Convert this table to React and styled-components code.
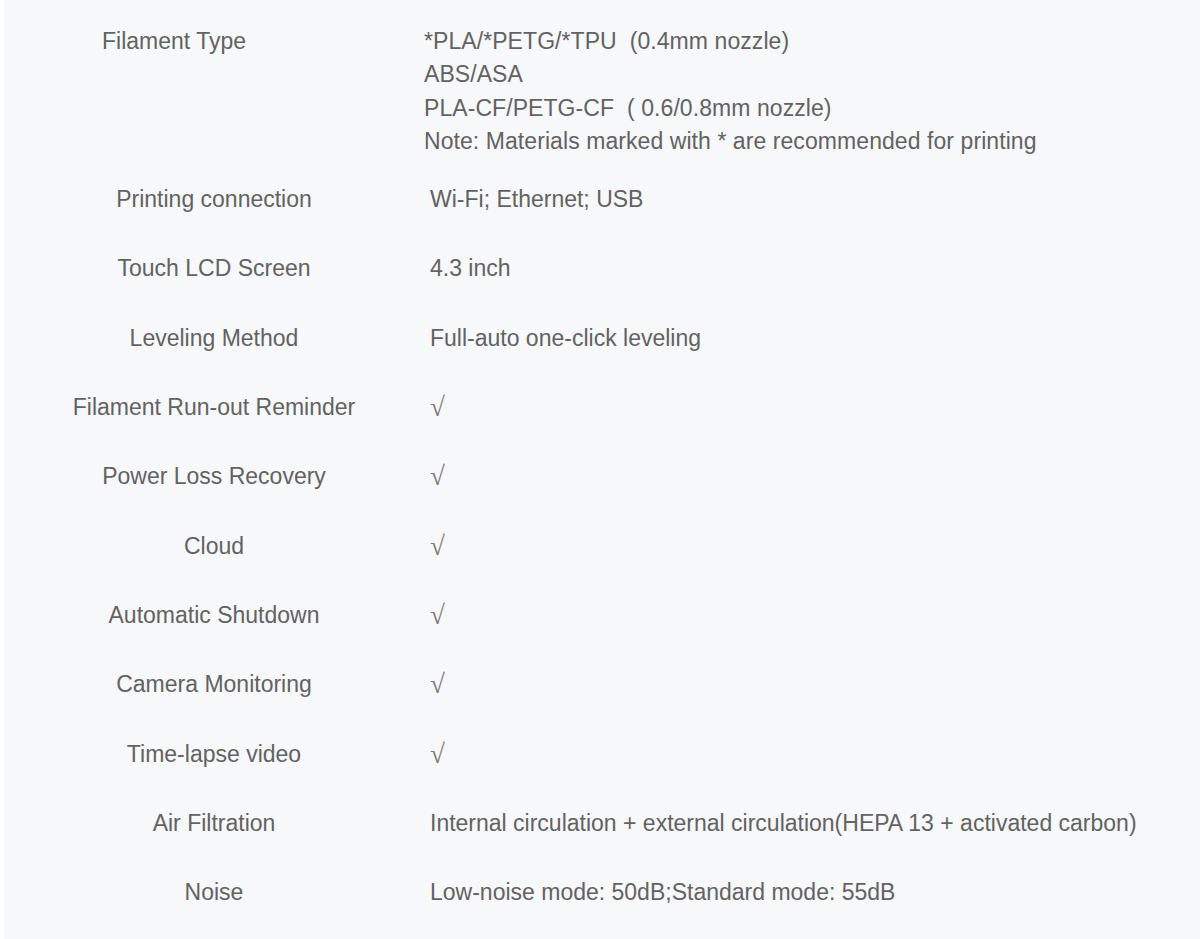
import React from "react";
import styled, { createGlobalStyle } from "styled-components";

const GlobalStyle = createGlobalStyle`
  html, body {
    margin: 0;
    padding: 0;
    background: #ffffff;
  }
  body {
    font-family: "Liberation Sans", Arial, sans-serif;
  }
`;

const SpecSheet = styled.section`
  margin-left: 4px;
  height: 939px;
  background-color: #f7f8fa;
  color: #626262;
  font-size: 23px;
  padding-top: 25px;
  box-sizing: border-box;
`;

const FilamentBlock = styled.div`
  display: grid;
  grid-template-columns: 420px 1fr;
  line-height: 33.4px;
  margin-bottom: 6.4px;
`;

const BlockLabel = styled.div`
  padding-left: 98px;
  text-align: left;
`;

const BlockLines = styled.div`
  display: flex;
  flex-direction: column;
  letter-spacing: 0.07px;
`;

const SpecRow = styled.div`
  display: grid;
  grid-template-columns: 420px 1fr;
  align-items: center;
  height: 69.3px;
`;

const Label = styled.div`
  text-align: center;
`;

const Value = styled.div`
  padding-left: 6px;
  font-family: ${(p) =>
    p.$check ? '"Liberation Serif", "DejaVu Serif", serif' : "inherit"};
  font-size: ${(p) => (p.$check ? "27px" : "inherit")};
  color: ${(p) => (p.$check ? "#7a7a7a" : "inherit")};
`;

const filamentLines = [
  "*PLA/*PETG/*TPU\u00a0\u00a0(0.4mm nozzle)",
  "ABS/ASA",
  "PLA-CF/PETG-CF\u00a0\u00a0( 0.6/0.8mm nozzle)",
  "Note: Materials marked with * are recommended for printing",
];

const specs = [
  { label: "Printing connection", value: "Wi-Fi; Ethernet; USB" },
  { label: "Touch LCD Screen", value: "4.3 inch" },
  { label: "Leveling Method", value: "Full-auto one-click leveling" },
  { label: "Filament Run-out Reminder", check: true },
  { label: "Power Loss Recovery", check: true },
  { label: "Cloud", check: true },
  { label: "Automatic Shutdown", check: true },
  { label: "Camera Monitoring", check: true },
  { label: "Time-lapse video", check: true },
  {
    label: "Air Filtration",
    value:
      "Internal circulation + external circulation(HEPA 13 + activated carbon)",
  },
  { label: "Noise", value: "Low-noise mode: 50dB;Standard mode: 55dB" },
];

const App = () => {
  return (
    <>
      <GlobalStyle />
      <SpecSheet>
        <FilamentBlock>
          <BlockLabel>Filament Type</BlockLabel>
          <BlockLines>
            {filamentLines.map((line) => (
              <span key={line}>{line}</span>
            ))}
          </BlockLines>
        </FilamentBlock>
        {specs.map((spec) => (
          <SpecRow key={spec.label}>
            <Label>{spec.label}</Label>
            <Value $check={spec.check}>{spec.check ? "√" : spec.value}</Value>
          </SpecRow>
        ))}
      </SpecSheet>
    </>
  );
};

export default App;
